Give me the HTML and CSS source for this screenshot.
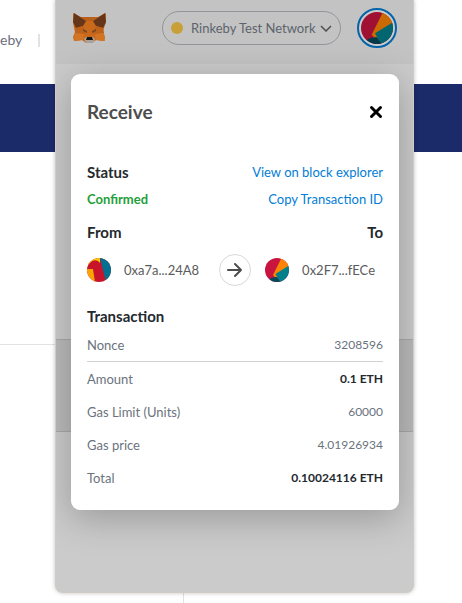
FILE: index.html
```html
<!DOCTYPE html>
<html lang="en">
<head>
<meta charset="utf-8">
<meta name="viewport" content="width=device-width, initial-scale=1">
<title>Receive</title>
<link rel="stylesheet" href="styles.css">
</head>
<body>
<svg class="defs" aria-hidden="true">
  <symbol id="jazz-to" viewBox="0 0 24 24">
    <rect width="24" height="24" fill="#c8143f"/>
    <path d="M17-1 8 17l4 5 13-12V-1z" fill="#fb8405"/>
    <path d="M25 7 10.500 16l5 9h10z" fill="#017f8b"/>
    <path d="M3 22Q7 18.500 12 19l4 6H3z" fill="#03495b"/>
  </symbol>
  <symbol id="jazz-from" viewBox="0 0 24 24">
    <rect width="24" height="24" fill="#c8142b"/>
    <path d="M0 0h13v5L11 3Q6 1 3 5L0 8z" fill="#f8c604"/>
    <path d="M0 11 6 11 8 24H0z" fill="#faa405"/>
    <path d="M13 0h11v24h-5z" fill="#027091"/>
  </symbol>
</svg>
<div class="page">
  <div class="topbar"><span>eby</span><span class="bar"></span></div>
  <div class="banner"></div>
  <div class="block"></div>
  <div class="lower"></div>
</div>
<main class="popup">
  <div class="wallet">
    <header class="wallet-head">
      <svg class="fox" viewBox="0 0 34 32" role="img" aria-label="Wallet">
        <path d="M1 1 9 5h17l8-4v9l-2 6-1 4 2 5-1 4-8-1-4 3h-6l-4-3-8 1-1-4 2-5-1-4-1-6z" fill="#c8691b"/>
        <path d="m9 5 5 4h6l6-4z" fill="#b9601b"/>
        <path d="m2 1 12 8-3 5-7 2-3-6zM33 1 21 9l3 5 7 2 3-6z" fill="#66361a"/>
        <path d="m4 16 7-2 3 8-11-1zM31 16l-7-2-3 8 11-1z" fill="#bd611b"/>
        <path d="m3 21 9 1-1 6-9 1zM32 21l-9 1 1 6 9 1z" fill="#d17524"/>
        <path d="m11 17 4 2v2l-4-2zM24 17l-4 2v2l4-2z" fill="#7a4728"/>
        <path d="m12 27 2-2h7l2 2-2 4h-7z" fill="#aaa09a"/>
        <path d="M15 25h5l1 3h-7z" fill="#151515"/>
      </svg>
      <button class="network" type="button"><span class="dot"></span><span>Rinkeby Test Network</span>
        <svg class="chev" viewBox="0 0 12 7" aria-hidden="true"><path d="m1 1 5 5 5-5"/></svg>
      </button>
      <button class="account" type="button" aria-label="Account"><svg viewBox="0 0 24 24"><use href="#jazz-to"/></svg></button>
    </header>
    <div class="band"></div>
  </div>
  <section class="modal" role="dialog" aria-labelledby="title">
    <div class="title-row">
      <h1 id="title">Receive</h1>
      <button class="close" type="button" aria-label="Close"><svg viewBox="0 0 14 14"><path d="m2.500 2.500 9 9m0-9-9 9"/></svg></button>
    </div>
    <div class="row status"><h2>Status</h2><a href="#">View on block explorer</a></div>
    <div class="row confirm"><strong>Confirmed</strong><a href="#">Copy Transaction ID</a></div>
    <div class="row ends"><h2>From</h2><h2>To</h2></div>
    <div class="parties">
      <div class="party"><svg class="avatar" viewBox="0 0 24 24" aria-hidden="true"><use href="#jazz-from"/></svg><span>0xa7a...24A8</span></div>
      <div class="arrow"><svg viewBox="0 0 16 16" aria-hidden="true"><path d="M1 8h13M8 2l6 6-6 6"/></svg></div>
      <div class="party"><svg class="avatar" viewBox="0 0 24 24" aria-hidden="true"><use href="#jazz-to"/></svg><span>0x2F7...fECe</span></div>
    </div>
    <h2 class="tx-title">Transaction</h2>
    <table>
      <tbody>
        <tr class="ruled"><th scope="row">Nonce</th><td>3208596</td></tr>
        <tr><th scope="row">Amount</th><td class="strong">0.1 ETH</td></tr>
        <tr><th scope="row">Gas Limit (Units)</th><td>60000</td></tr>
        <tr><th scope="row">Gas price</th><td>4.01926934</td></tr>
        <tr><th scope="row">Total</th><td class="strong">0.10024116 ETH</td></tr>
      </tbody>
    </table>
  </section>
</main>
</body>
</html>
```
FILE: styles.css
```css
* { box-sizing: border-box; }
body {
  margin: 0;
  position: relative;
  min-height: 100vh;
  overflow: hidden;
  background: #fff;
  color: #24292e;
  font: 13px/16px Lato, "Liberation Sans", sans-serif;
}
h1, h2 { margin: 0; }
button { padding: 0; border: 0; background: none; font: inherit; color: inherit; }
svg { display: block; }
.defs { position: absolute; width: 0; height: 0; }

.page { display: flex; flex-direction: column; height: 100vh; }
.topbar {
  display: flex;
  align-items: center;
  gap: 16px;
  height: 84px;
  padding-bottom: 4px;
  color: #6b7080;
  font-size: 14px;
}
.bar { width: 2px; height: 13px; background: #e1e2e6; }
.banner { height: 68px; background: #1b2a69; }
.block { height: 193px; border-bottom: 1px solid #e2e2e2; margin-right: 48px; }
.lower { flex: 1; width: 184px; border-right: 1px solid #e2e2e2; }

.popup {
  position: absolute;
  top: 0;
  left: 55px;
  right: 48px;
  display: grid;
  overflow: hidden;
  border: 1px solid #d0cbc5;
  border-top: 0;
  border-radius: 0 0 8px 8px;
  background: #cbcbcb;
  box-shadow: 0 0 4px rgba(0, 0, 0, 0.25);
}
.wallet, .modal { grid-area: 1 / 1; }
.wallet-head {
  display: flex;
  align-items: center;
  height: 64px;
  padding: 0 16px 8px;
  background: #c3c3c3;
}
.fox { width: 34px; height: 32px; }
.network {
  display: flex;
  align-items: center;
  gap: 8px;
  width: 179px;
  height: 34px;
  margin-left: auto;
  padding: 0 8px;
  border: 1px solid #92959a;
  border-radius: 17px;
  color: #5c636b;
  white-space: nowrap;
}
.dot { flex: none; width: 12px; height: 12px; border-radius: 50%; background: #c99f38; }
.chev { flex: none; width: 12px; height: 7px; margin-left: auto; fill: none; stroke: #4d4d4d; stroke-width: 1.5; }
.network .chev { margin-left: -4px; }
.account {
  width: 40px;
  height: 40px;
  margin-left: 16px;
  padding: 2px;
  border: 2px solid #0364ab;
  border-radius: 50%;
  background: #cbcbcb;
}
.account svg { width: 32px; height: 32px; border-radius: 50%; filter: brightness(0.8); }
.band {
  height: 93px;
  margin-top: 275px;
  border: solid #a8a8a8;
  border-width: 1px 0;
  background: #bababa;
}

.modal {
  position: relative;
  margin: 74px 14px 82px 15px;
  padding: 16px;
  border-radius: 9px;
  background: #fff;
  box-shadow: 0 8px 36px rgba(0, 0, 0, 0.25);
}
.title-row, .row { display: flex; align-items: center; justify-content: space-between; }
.title-row { height: 44px; margin-bottom: 24px; }
h1 { font-size: 19px; line-height: 24px; color: #4d4d4d; }
h2 { font-size: 15px; line-height: 24px; }
.close svg { width: 14px; height: 14px; fill: none; stroke: #000; stroke-width: 3; stroke-linecap: round; }
a { color: #037dd6; text-decoration: none; }
.status { height: 28px; }
.confirm { height: 26px; }
.confirm strong { color: #1fa03b; }
.ends { height: 40px; }
.parties { display: flex; align-items: center; height: 36px; padding-right: 8px; }
.party { display: flex; align-items: center; gap: 13px; color: #5b5b5b; }
.avatar { width: 24px; height: 24px; border-radius: 50%; }
.arrow {
  display: grid;
  place-items: center;
  width: 32px;
  height: 32px;
  margin: 0 14px 0 auto;
  border: 1px solid #d6d9dc;
  border-radius: 50%;
}
.arrow svg { width: 16px; height: 16px; fill: none; stroke: #4d4d4d; stroke-width: 2; stroke-linecap: round; stroke-linejoin: round; }
.tx-title { margin-top: 16px; }
table { width: 100%; border-collapse: separate; border-spacing: 0; color: #6a737d; }
th, td { height: 33px; padding: 0; font-weight: 400; text-align: left; }
td { font-size: 12px; text-align: right; }
.ruled th, .ruled td { height: 34px; border-bottom: 1px solid #d2d2d2; }
.strong { color: #24292e; font-weight: 700; }
```
